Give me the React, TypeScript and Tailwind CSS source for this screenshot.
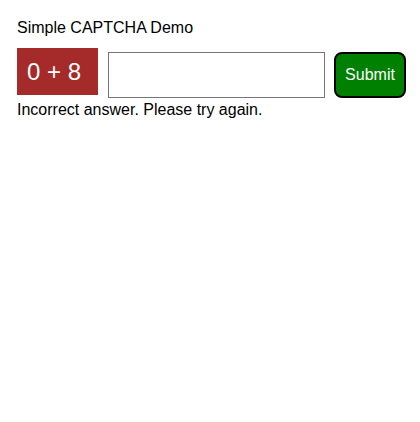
export default function App() {
  return (
    <div
      className="min-h-screen bg-white px-[17px] pt-[19px] text-black"
      style={{ fontFamily: '"Liberation Sans", Arial, sans-serif' }}
    >
      <div className="text-[16px] leading-[18px]">Simple CAPTCHA Demo</div>
      <div className="mt-[11px] flex items-start">
        <div className="flex h-[47px] w-[81px] shrink-0 items-center bg-[#a52a2a] pl-[10px] text-[24px] leading-[28px] text-white">
          0 + 8
        </div>
        <input
          type="text"
          className="ml-[10px] mt-[4px] h-[46px] w-[217px] shrink-0 border border-[#767676] bg-white px-2 text-[16px] outline-none"
        />
        <button className="ml-[9px] mt-[4px] flex h-[46px] w-[72px] shrink-0 items-center justify-center rounded-[8px] border-2 border-black bg-[#008000] text-[16px] text-white">
          Submit
        </button>
      </div>
      <div className="mt-[3px] text-[16px] leading-[18px]">
        Incorrect answer. Please try again.
      </div>
    </div>
  );
}
